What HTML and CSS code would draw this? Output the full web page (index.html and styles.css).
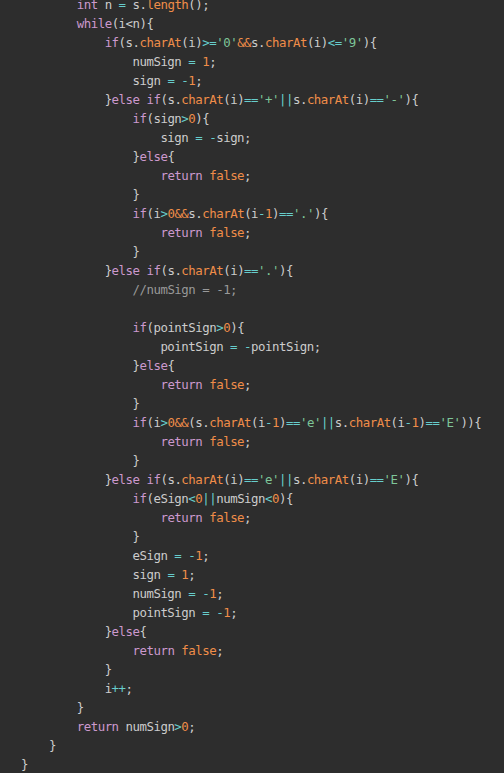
FILE: index.html
```html
<!DOCTYPE html>
<html>
<head>
<meta charset="utf-8">
<link rel="stylesheet" href="styles.css">
</head>
<body>
<div class="editor">
<pre class="code"><code>        <span class="k">int</span> n <span class="o">=</span> s.<span class="f">length</span>();
        <span class="k">while</span>(i&lt;n){
            <span class="k">if</span>(s.<span class="f">charAt</span>(i)<span class="o">&gt;=</span><span class="s">'0'</span><span class="a">&amp;&amp;</span>s.<span class="f">charAt</span>(i)<span class="o">&lt;=</span><span class="s">'9'</span>){
                numSign <span class="o">=</span> <span class="n">1</span>;
                sign <span class="o">=</span> <span class="o">-</span><span class="n">1</span>;
            }<span class="k">else</span> <span class="k">if</span>(s.<span class="f">charAt</span>(i)<span class="o">==</span><span class="s">'+'</span><span class="o">||</span>s.<span class="f">charAt</span>(i)<span class="o">==</span><span class="s">'-'</span>){
                <span class="k">if</span>(sign<span class="o">&gt;</span><span class="n">0</span>){
                    sign <span class="o">=</span> <span class="o">-</span>sign;
                }<span class="k">else</span>{
                    <span class="k">return</span> <span class="n">false</span>;
                }
                <span class="k">if</span>(i<span class="o">&gt;</span><span class="a">0&amp;&amp;</span>s.<span class="f">charAt</span>(i<span class="o">-</span><span class="n">1</span>)<span class="o">==</span><span class="s">'.'</span>){
                    <span class="k">return</span> <span class="n">false</span>;
                }
            }<span class="k">else</span> <span class="k">if</span>(s.<span class="f">charAt</span>(i)<span class="o">==</span><span class="s">'.'</span>){
                <span class="c">//numSign = -1;</span>

                <span class="k">if</span>(pointSign<span class="o">&gt;</span><span class="n">0</span>){
                    pointSign <span class="o">=</span> <span class="o">-</span>pointSign;
                }<span class="k">else</span>{
                    <span class="k">return</span> <span class="n">false</span>;
                }
                <span class="k">if</span>(i<span class="o">&gt;</span><span class="a">0&amp;&amp;</span>(s.<span class="f">charAt</span>(i<span class="o">-</span><span class="n">1</span>)<span class="o">==</span><span class="s">'e'</span><span class="o">||</span>s.<span class="f">charAt</span>(i<span class="o">-</span><span class="n">1</span>)<span class="o">==</span><span class="s">'E'</span>)){
                    <span class="k">return</span> <span class="n">false</span>;
                }
            }<span class="k">else</span> <span class="k">if</span>(s.<span class="f">charAt</span>(i)<span class="o">==</span><span class="s">'e'</span><span class="o">||</span>s.<span class="f">charAt</span>(i)<span class="o">==</span><span class="s">'E'</span>){
                <span class="k">if</span>(eSign<span class="o">&lt;</span><span class="n">0</span><span class="o">||</span>numSign<span class="o">&lt;</span><span class="n">0</span>){
                    <span class="k">return</span> <span class="n">false</span>;
                }
                eSign <span class="o">=</span> <span class="o">-</span><span class="n">1</span>;
                sign <span class="o">=</span> <span class="n">1</span>;
                numSign <span class="o">=</span> <span class="o">-</span><span class="n">1</span>;
                pointSign <span class="o">=</span> <span class="o">-</span><span class="n">1</span>;
            }<span class="k">else</span>{
                <span class="k">return</span> <span class="n">false</span>;
            }
            i<span class="o">++</span>;
        }
        <span class="k">return</span> numSign<span class="o">&gt;</span><span class="n">0</span>;
    }
}</code></pre>
<div class="cursor-mark"></div>
</div>
</body>
</html>
```

FILE: styles.css
```css
html, body {
  margin: 0;
  padding: 0;
  background: #2d2d2d;
  height: 100%;
  overflow: hidden;
}

.editor {
  position: relative;
  height: 100%;
}

.code {
  margin: -5px 0 0 0;
  padding: 0 0 0 21px;
  font-family: "DejaVu Sans Mono", "Liberation Mono", monospace;
  font-size: 12.4px;
  letter-spacing: -0.49px;
  line-height: 19px;
  color: #cccccc;
  tab-size: 4;
}

.code code {
  font: inherit;
  letter-spacing: inherit;
}

.k { color: #cc99cd; }
.f { color: #f08d49; }
.s { color: #7ec699; }
.o { color: #67cdcc; }
.n { color: #f08d49; }
.a { color: #f08d49; }
.c { color: #999999; }

.cursor-mark {
  position: absolute;
  top: 0;
  left: 249px;
  width: 6px;
  height: 3px;
  background: #ffffff;
}
```
